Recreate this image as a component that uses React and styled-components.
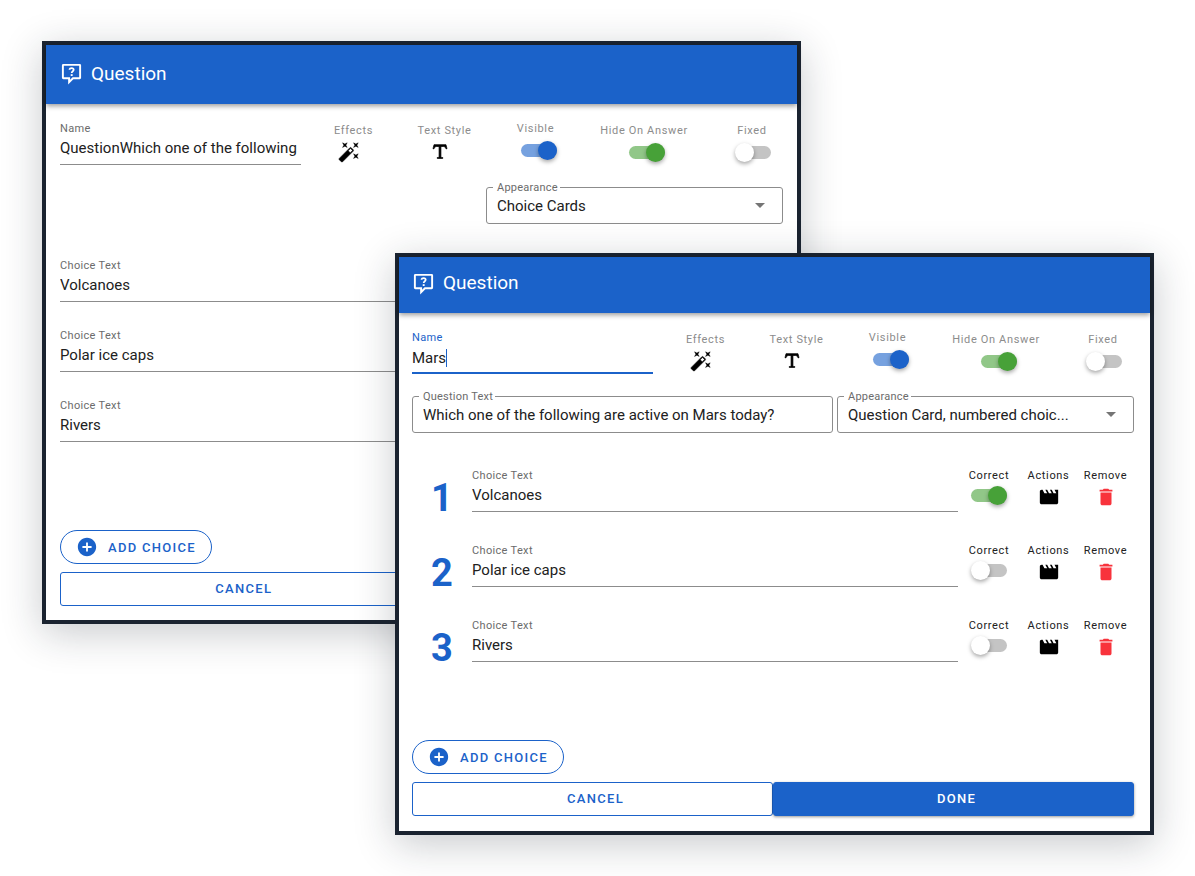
import React, { useState } from 'react';
import styled, { createGlobalStyle, css } from 'styled-components';
import { MdAddCircle, MdDelete, MdMovie } from 'react-icons/md';

const BLUE = '#1b62c9';
const GREEN = '#47a138';

const GlobalStyle = createGlobalStyle`
    *, *::before, *::after {
        box-sizing: border-box;
    }
    body {
        margin: 0;
        background: #fff;
        color: #212121;
        font-family: Roboto, Arial, sans-serif;
    }
    input, select, button {
        font-family: inherit;
        color: inherit;
    }
`

const Desktop = styled.main`
    position: relative;
    min-height: 100vh;
    overflow: hidden;
`

const Dialog = styled.section`
    position: absolute;
    top: ${props => props.$top};
    left: ${props => props.$left};
    right: ${props => props.$right};
    background: #fff;
    border: 4px solid #1a2330;
    box-shadow: 0 9px 38px rgba(26, 35, 48, 0.24);
`

const Header = styled.header`
    display: flex;
    align-items: center;
    gap: 8px;
    height: ${props => (props.$compact ? '56px' : '59px')};
    padding: ${props => (props.$compact ? '0 13px 4px' : '0 14px 2px')};
    background: ${BLUE};
    color: #fff;
    box-shadow: 0 2px 5px rgba(0, 0, 0, 0.4);

    h1 {
        margin: 0;
        font-size: 19px;
        font-weight: 400;
        line-height: 24px;
    }
`

const Body = styled.form`
    padding: ${props => (props.$compact ? '18px 16px 15px 13px' : '18px 14px 14px')};
`

const TopRow = styled.div`
    display: grid;
    grid-template-columns: 241px 1fr;
    column-gap: 7px;
    margin-bottom: 22px;
`

const Tools = styled.div`
    display: grid;
    grid-template-columns: 91px 91px 91px 126px 1fr;
`

const Tool = styled.div`
    display: flex;
    flex-direction: column;
    align-items: center;
    gap: ${props => (props.$dark ? '3px' : '5px')};
    padding-top: ${props => (props.$raised ? '0' : '2px')};
    font-size: 11px;
    line-height: 14px;
    letter-spacing: 0.06em;
    white-space: nowrap;
    color: ${props => (props.$dark ? '#212121' : '#8c8c8c')};

    &:last-child {
        width: ${props => (props.$dark ? 'auto' : '62px')};
        justify-self: ${props => (props.$dark ? 'stretch' : 'end')};
    }
`

const IconButton = styled.button`
    display: flex;
    align-items: center;
    height: ${props => (props.$shifted ? '18px' : '22px')};
    padding: 0;
    margin-right: ${props => (props.$shifted ? '10px' : '0')};
    border: none;
    background: none;
    color: ${props => props.$color || '#000'};
    font-size: 22px;
    cursor: pointer;

    svg {
        flex: none;
    }
`

const SwitchBox = styled.input`
    appearance: none;
    position: relative;
    width: 36px;
    height: 19px;
    margin: 0 0 0 ${props => props.$shift || '0'};
    cursor: pointer;

    &::before {
        content: '';
        position: absolute;
        top: 3px;
        left: 2px;
        right: 0;
        height: 13px;
        border-radius: 7px;
        background: #c4c4c4;
    }
    &::after {
        content: '';
        position: absolute;
        top: 0;
        left: 0;
        width: 19px;
        height: 19px;
        border-radius: 50%;
        background: #fff;
        box-shadow: 0 2px 4px rgba(0, 0, 0, 0.35);
    }
    &:checked::before {
        left: 0;
        background: ${props => props.$color};
        opacity: 0.6;
    }
    &:checked::after {
        left: 17px;
        background: ${props => props.$color};
    }
`

const Field = styled.div`
    position: relative;
    min-width: 0;

    label {
        display: block;
        font-size: 11px;
        line-height: 14px;
        letter-spacing: 0.03em;
        color: ${props => (props.$focused ? BLUE : '#6b6b6b')};
    }
    input {
        display: block;
        width: 100%;
        height: 29px;
        padding: 0 0 ${props => (props.$focused ? '1px' : '4px')};
        border: none;
        border-bottom: ${props => (props.$focused ? `2px solid ${BLUE}` : '1px solid #8c8c8c')};
        outline: none;
        background: none;
        font-size: 15px;
        caret-color: ${BLUE};
    }
`

const Caret = styled.span`
    position: absolute;
    top: 18px;
    left: 34px;
    width: 1px;
    height: 18px;
    background: ${BLUE};
`

const SettingsRow = styled.div`
    display: grid;
    grid-template-columns: 1fr 297px;
    gap: 4px;
`

const Outlined = styled.div`
    position: relative;
    grid-column: ${props => props.$column};

    label {
        position: absolute;
        top: -6px;
        left: 7px;
        padding: 0 2px 0 4px;
        background: #fff;
        font-size: 11px;
        line-height: 14px;
        letter-spacing: 0.02em;
        color: #6b6b6b;
    }
    input, select {
        appearance: none;
        display: block;
        width: 100%;
        height: 37px;
        padding: 0 10px;
        border: 1px solid #8c8c8c;
        border-radius: 3px;
        outline: none;
        background: none;
        font-size: 15px;
    }
    svg {
        position: absolute;
        top: 16px;
        right: 18px;
        pointer-events: none;
    }
`

const Choices = styled.div`
    display: grid;
    row-gap: ${props => (props.$compact ? '32px' : '27px')};
    padding: ${props => (props.$compact ? '36px 0 78px' : '35px 0 88px')};
`

const Choice = styled.div`
    display: grid;
    height: 43px;
    ${props => props.$detailed && css`
        grid-template-columns: 60px 1fr 62px 57px 57px;
    `}
`

const Number = styled.span`
    align-self: start;
    padding-top: 7px;
    text-align: center;
    font-size: 38px;
    font-weight: 700;
    line-height: 44px;
    color: ${BLUE};
`

const Button = styled.button`
    display: flex;
    align-items: center;
    justify-content: center;
    height: 34px;
    border: 1px solid ${BLUE};
    border-radius: 3px;
    background: ${props => (props.$filled ? BLUE : 'none')};
    color: ${props => (props.$filled ? '#fff' : BLUE)};
    box-shadow: ${props => (props.$filled ? '0 1px 3px rgba(0, 0, 0, 0.4)' : 'none')};
    padding: 0 0 2px 6px;
    font-size: 13px;
    font-weight: 500;
    letter-spacing: 0.1em;
    cursor: pointer;
`

const AddButton = styled(Button)`
    gap: 10px;
    padding: 0 15px;
    border-radius: 17px;
    margin-bottom: 8px;

    svg {
        font-size: 22px;
    }
`

const Actions = styled.div`
    display: grid;
    grid-template-columns: 1fr 1fr;
`

const QuestionIcon = () => (
    <svg width="23" height="23" viewBox="0 0 24 24" fill="none" aria-hidden="true">
        <path d="M3.5 3H20.5Q21 3 21 3.5V16.5Q21 17 20.5 17H13.5L9.5 21V17H3.5Q3 17 3 16.5V3.5Q3 3 3.5 3Z" stroke="currentColor" strokeWidth="2" />
        <path d="M9.9 8.2C9.9 6.9 10.9 6.3 12.1 6.3S14.3 6.9 14.3 8.1C14.3 9.6 12.2 9.7 12.2 11.5" stroke="currentColor" strokeWidth="1.8" />
        <path d="M11.2 12.7H13.2V14.6H11.2Z" fill="currentColor" />
    </svg>
)

const WandIcon = () => (
    <svg width="22" height="22" viewBox="0 0 24 24" fill="currentColor" aria-hidden="true">
        <path stroke="currentColor" strokeWidth="0.5" d="M7.5 5.6L5 7L6.4 4.5L5 2L7.5 3.4L10 2L8.6 4.5L10 7L7.5 5.6M19.5 15.4L22 14L20.6 16.5L22 19L19.5 17.6L17 19L18.4 16.5L17 14L19.5 15.4M22 2L20.6 4.5L22 7L19.5 5.6L17 7L18.4 4.5L17 2L19.5 3.4L22 2M13.34 12.78L15.78 10.34L13.66 8.22L11.22 10.66L13.34 12.78M14.37 7.29L16.71 9.63C17.1 10 17.1 10.65 16.71 11.04L5.04 22.71C4.65 23.1 4 23.1 3.63 22.71L1.29 20.37C.9 20 .9 19.35 1.29 18.96L12.96 7.29C13.35 6.9 14 6.9 14.37 7.29Z" />
    </svg>
)

const TextIcon = () => (
    <svg width="22" height="22" viewBox="0 0 24 24" fill="currentColor" aria-hidden="true">
        <path stroke="currentColor" strokeWidth="0.8" d="M18.5 4L19.66 8.35L18.7 8.61C18.25 7.74 17.79 6.87 17.26 6.43C16.73 6 16.11 6 15.5 6H13V16.5C13 17 13 17.5 13.33 17.75C13.67 18 14.33 18 15 18V19H9V18C9.67 18 10.33 18 10.67 17.75C11 17.5 11 17 11 16.5V6H8.5C7.89 6 7.27 6 6.74 6.43C6.21 6.87 5.75 7.74 5.3 8.61L4.34 8.35L5.5 4H18.5Z" />
    </svg>
)

const Switch = ({ id, label, color = GREEN, on = false, raised, dark, shift }) => {
    const [checked, setChecked] = useState(on)
    return (
        <Tool $raised={raised} $dark={dark}>
            <label htmlFor={id}>{label}</label>
            <SwitchBox
                id={id}
                type="checkbox"
                role="switch"
                checked={checked}
                onChange={() => setChecked(!checked)}
                $color={color}
                $shift={shift}
            />
        </Tool>
    )
}

const TextField = ({ id, label, value, focused }) => (
    <Field $focused={focused}>
        <label htmlFor={id}>{label}</label>
        <input id={id} type="text" defaultValue={value} />
        {focused && <Caret />}
    </Field>
)

const QuestionDialog = ({ id, name, questionText, appearance, choices, detailed, ...place }) => (
    <Dialog $top={place.top} $left={place.left} $right={place.right}>
        <Header $compact={detailed}>
            <QuestionIcon />
            <h1>Question</h1>
        </Header>
        <Body $compact={detailed} onSubmit={event => event.preventDefault()}>
            <TopRow>
                <TextField id={`${id}-name`} label="Name" value={name} focused={detailed} />
                <Tools>
                    <Tool>
                        <span>Effects</span>
                        <IconButton type="button" aria-label="Effects" $shifted><WandIcon /></IconButton>
                    </Tool>
                    <Tool>
                        <span>Text Style</span>
                        <IconButton type="button" aria-label="Text Style" $shifted><TextIcon /></IconButton>
                    </Tool>
                    <Switch id={`${id}-visible`} label="Visible" color={BLUE} on raised shift="6px" />
                    <Switch id={`${id}-hide`} label="Hide On Answer" on shift="6px" />
                    <Switch id={`${id}-fixed`} label="Fixed" shift="2px" />
                </Tools>
            </TopRow>
            <SettingsRow>
                {questionText && (
                    <Outlined $column="1">
                        <input id={`${id}-text`} type="text" defaultValue={questionText} />
                        <label htmlFor={`${id}-text`}>Question Text</label>
                    </Outlined>
                )}
                <Outlined $column="2">
                    <select id={`${id}-appearance`} defaultValue={appearance}>
                        <option>{appearance}</option>
                    </select>
                    <label htmlFor={`${id}-appearance`}>Appearance</label>
                    <svg width="10" height="5" viewBox="0 0 10 5" aria-hidden="true">
                        <path d="M0 0H10L5 5Z" fill="#757575" />
                    </svg>
                </Outlined>
            </SettingsRow>
            <Choices $compact={detailed}>
                {choices.map((choice, i) => (
                    <Choice key={choice.text} $detailed={detailed}>
                        {detailed && <Number>{i + 1}</Number>}
                        <TextField id={`${id}-choice-${i}`} label="Choice Text" value={choice.text} />
                        {detailed && (
                            <>
                                <Switch id={`${id}-correct-${i}`} label="Correct" on={choice.correct} raised dark />
                                <Tool $raised $dark>
                                    <span>Actions</span>
                                    <IconButton type="button" aria-label="Actions"><MdMovie /></IconButton>
                                </Tool>
                                <Tool $raised $dark>
                                    <span>Remove</span>
                                    <IconButton type="button" aria-label="Remove" $color="#f8333c"><MdDelete /></IconButton>
                                </Tool>
                            </>
                        )}
                    </Choice>
                ))}
            </Choices>
            <AddButton type="button"><MdAddCircle />ADD CHOICE</AddButton>
            <Actions>
                <Button type="button">CANCEL</Button>
                <Button type="submit" $filled>DONE</Button>
            </Actions>
        </Body>
    </Dialog>
)

const choices = [
    { text: 'Volcanoes', correct: true },
    { text: 'Polar ice caps', correct: false },
    { text: 'Rivers', correct: false }
]

const App = () => (
    <Desktop>
        <GlobalStyle />
        <QuestionDialog
            id="cards"
            top="41px"
            left="42px"
            right="394px"
            name="QuestionWhich one of the following"
            appearance="Choice Cards"
            choices={choices}
        />
        <QuestionDialog
            id="numbered"
            top="253px"
            left="395px"
            right="41px"
            name="Mars"
            questionText="Which one of the following are active on Mars today?"
            appearance="Question Card, numbered choic..."
            choices={choices}
            detailed
        />
    </Desktop>
)

export default App;
